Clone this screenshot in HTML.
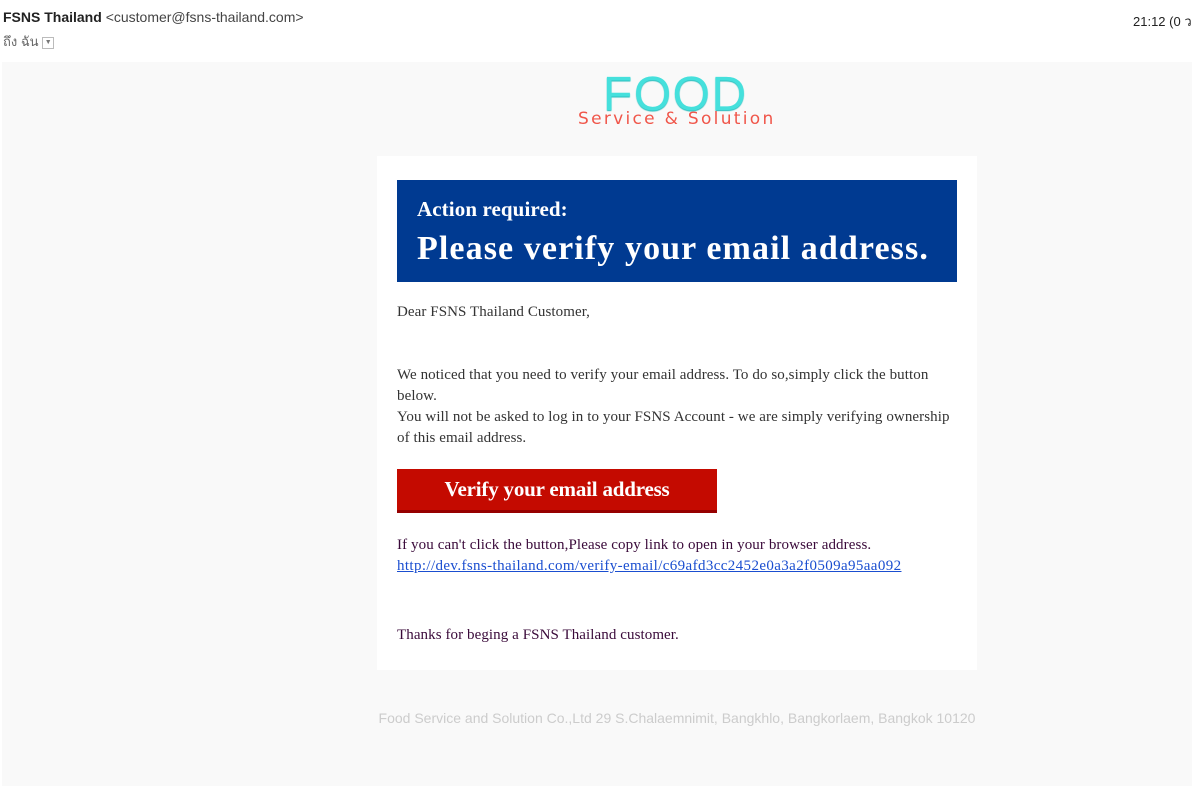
<!DOCTYPE html>
<html><head><meta charset="utf-8"><style>
body{margin:0;width:1192px;height:786px;background:#fff;position:relative;overflow:hidden;font-family:"Liberation Sans",sans-serif}
.a{position:absolute;white-space:nowrap}
.serif{font-family:"Liberation Serif",serif}
</style></head><body>
<div class="a" style="left:3px;top:9px;font-size:14px;color:#222"><b>FSNS Thailand</b> <span style="color:#444">&lt;customer@fsns-thailand.com&gt;</span></div>
<div class="a" style="left:3px;top:31px;font-size:13px;color:#666;font-family:'Liberation Sans','Noto Sans CJK SC',sans-serif">ถึง ฉัน <span style="display:inline-block;width:10px;height:10px;border:1px solid #bbb;vertical-align:middle;font-size:7px;text-align:center;line-height:10px;color:#777">▼</span></div>
<div class="a" style="left:1133px;top:11px;font-size:13px;color:#222">21:12 (0 ว</div>
<div class="a" style="left:2px;top:62px;width:1190px;height:724px;background:#f9f9f9"></div>
<div class="a" style="left:603px;top:67px;font-size:48px;color:#45e0dc;letter-spacing:1.5px;text-shadow:0 1px 1px #2bb;">FOOD</div>
<div class="a" style="left:578px;top:109px;font-size:17px;color:#f0564a;letter-spacing:2.3px;font-family:'DejaVu Sans',sans-serif">Service &amp; Solution</div>
<div class="a" style="left:377px;top:156px;width:600px;height:514px;background:#fff"></div>
<div class="a" style="left:397px;top:180px;width:560px;height:102px;background:#003a91"></div>
<div class="a serif" style="left:417px;top:197px;font-size:21px;font-weight:bold;color:#fff;letter-spacing:0.1px">Action required:</div>
<div class="a serif" style="left:417px;top:230px;font-size:34px;font-weight:bold;color:#fff;letter-spacing:1.1px">Please verify your email address.</div>
<div class="a serif" style="left:397px;top:302px;font-size:15px;color:#333;line-height:21px;letter-spacing:0.08px">Dear FSNS Thailand Customer,</div>
<div class="a serif" style="left:397px;top:365px;font-size:15px;color:#333;line-height:21px;letter-spacing:0.08px">We noticed that you need to verify your email address. To do so,simply click the button<br>below.<br>You will not be asked to log in to your FSNS Account - we are simply verifying ownership<br>of this email address.</div>
<div class="a" style="left:397px;top:469px;width:320px;height:41px;background:#c40a00;border-bottom:3px solid #960000"></div>
<div class="a serif" style="left:397px;top:477px;width:320px;text-align:center;font-size:21px;font-weight:bold;color:#fff;letter-spacing:-0.2px">Verify your email address</div>
<div class="a serif" style="left:397px;top:535px;font-size:15px;color:#3a0a3a;line-height:21px;letter-spacing:0.1px">If you can't click the button,Please copy link to open in your browser address.<br><span style="color:#1a4ed0;text-decoration:underline;letter-spacing:0.38px">http://dev.fsns-thailand.com/verify-email/c69afd3cc2452e0a3a2f0509a95aa092</span></div>
<div class="a serif" style="left:397px;top:627px;font-size:15px;color:#3a0a3a;letter-spacing:0.08px">Thanks for beging a FSNS Thailand customer.</div>
<div class="a" style="left:377px;top:710px;width:600px;text-align:center;font-size:14px;color:#ccc">Food Service and Solution Co.,Ltd 29 S.Chalaemnimit, Bangkhlo, Bangkorlaem, Bangkok 10120</div>
</body></html>
